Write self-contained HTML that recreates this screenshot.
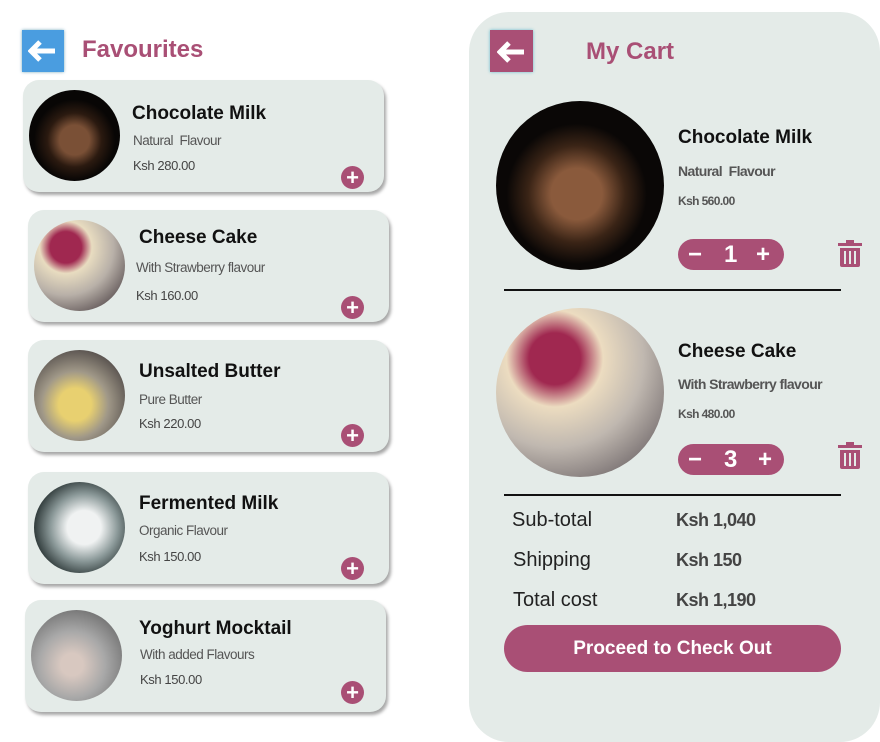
<!DOCTYPE html>
<html><head><style>
*{margin:0;padding:0;box-sizing:border-box}
body{width:880px;height:742px;background:#fff;position:relative;font-family:"Liberation Sans",sans-serif;overflow:hidden}
.a{position:absolute}
.n{letter-spacing:-0.6px}
.card{position:absolute;width:361px;height:112px;background:#e4ebe8;border-radius:16px;box-shadow:2px 3px 3px rgba(0,0,0,.35)}
.card .img{position:absolute;left:6px;top:10px;width:91px;height:91px;border-radius:50%}
.card .t{position:absolute;font-size:19px;font-weight:bold;color:#111}
.card .s{position:absolute;font-size:13.5px;color:#555;letter-spacing:-0.5px}
.card .p{position:absolute;font-size:13px;color:#444;letter-spacing:-0.4px}
.plus{position:absolute;width:23px;height:23px;border-radius:50%;background:#a94f75;color:#fff;font-weight:bold;font-size:22px;line-height:23px;text-align:center}
.pink{color:#a94f75}
.pill{position:absolute;width:106px;height:31px;border-radius:16px;background:#a94f75;color:#fff;font-weight:bold;font-size:24px;line-height:31px}
.line{position:absolute;left:504px;width:337px;height:2px;background:#111}
.row{position:absolute;font-size:20px;color:#222}
.rv{position:absolute;font-size:18px;font-weight:bold;color:#444;letter-spacing:-0.5px}
</style></head><body>
<div class="a" style="left:22px;top:30px;width:42px;height:42px;background:#4a9de0;box-shadow:0 0 3px #7ab"></div>
<svg class="a" style="left:28px;top:40px" width="30" height="22" viewBox="0 0 30 22"><path d="M12 2 L3 11 L12 20 M3 11 H27" stroke="#fff" stroke-width="5" fill="none"/></svg>
<div class="a pink" style="left:82px;top:36px;font-size:24px;font-weight:bold">Favourites</div>

<div class="card" style="left:23px;top:80px"><div class="img" style="background:radial-gradient(circle at 50% 55%,#7a5036 0 22%,#2b1a10 40%,#080605 60%)"></div><div class="t" style="left:109px;top:23px">Chocolate Milk</div><div class="s" style="left:110px;top:53px">Natural &nbsp;Flavour</div><div class="p" style="left:110px;top:78px">Ksh 280.00</div><div class="plus" style="left:318px;top:86px">+</div></div>
<div class="card" style="left:28px;top:210px"><div class="img" style="background:radial-gradient(circle at 35% 30%,#a02850 0 18%,#e8dcc0 30%,#b8b0a8 55%,#6a6060 80%)"></div><div class="t" style="left:111px;top:17px">Cheese Cake</div><div class="s" style="left:108px;top:50px">With Strawberry flavour</div><div class="p" style="left:108px;top:78px">Ksh 160.00</div><div class="plus" style="left:313px;top:86px">+</div></div>
<div class="card" style="left:28px;top:340px"><div class="img" style="background:radial-gradient(circle at 45% 60%,#e8d070 0 22%,#a09888 45%,#504a48 80%)"></div><div class="t" style="left:111px;top:21px">Unsalted Butter</div><div class="s" style="left:111px;top:52px">Pure Butter</div><div class="p" style="left:111px;top:76px">Ksh 220.00</div><div class="plus" style="left:313px;top:84px">+</div></div>
<div class="card" style="left:28px;top:472px"><div class="img" style="background:radial-gradient(circle at 55% 50%,#f0f2f2 0 25%,#8a9898 50%,#1a2424 80%)"></div><div class="t" style="left:111px;top:21px">Fermented Milk</div><div class="s" style="left:111px;top:51px">Organic Flavour</div><div class="p" style="left:111px;top:77px">Ksh 150.00</div><div class="plus" style="left:313px;top:85px">+</div></div>
<div class="card" style="left:25px;top:600px"><div class="img" style="background:radial-gradient(circle at 45% 60%,#d8c8c0 0 15%,#a8a8a8 45%,#707070 80%)"></div><div class="t" style="left:114px;top:18px">Yoghurt Mocktail</div><div class="s" style="left:115px;top:47px">With added Flavours</div><div class="p" style="left:115px;top:72px">Ksh 150.00</div><div class="plus" style="left:316px;top:81px">+</div></div>

<div class="a" style="left:469px;top:12px;width:411px;height:730px;background:#e4ebe8;border-radius:40px"></div>
<div class="a" style="left:490px;top:30px;width:43px;height:42px;background:#a94f75;box-shadow:0 0 3px #6bc"></div>
<svg class="a" style="left:497px;top:41px" width="30" height="22" viewBox="0 0 30 22"><path d="M12 2 L3 11 L12 20 M3 11 H27" stroke="#fff" stroke-width="5" fill="none"/></svg>
<div class="a pink" style="left:586px;top:38px;font-size:24px;font-weight:bold">My Cart</div>

<div class="a" style="left:496px;top:101px;width:168px;height:169px;border-radius:50%;background:radial-gradient(circle at 48% 55%,#8a5a3c 0 20%,#3a2416 38%,#0a0706 55%)"></div>
<div class="a" style="left:678px;top:127px;font-size:19px;font-weight:bold;color:#111">Chocolate Milk</div>
<div class="a n" style="left:678px;top:163px;font-size:14px;font-weight:bold;color:#555">Natural &nbsp;Flavour</div>
<div class="a n" style="left:678px;top:194px;font-size:12px;font-weight:bold;color:#555">Ksh 560.00</div>
<div class="pill" style="left:678px;top:239px"><span class="a" style="left:10px">−</span><span class="a" style="left:46px">1</span><span class="a" style="left:78px">+</span></div>
<svg class="a" style="left:838px;top:240px" width="24" height="27" viewBox="0 0 24 27"><rect x="0" y="3" width="24" height="3" fill="#a94f75"/><rect x="8" y="0" width="8" height="4" fill="#a94f75"/><path d="M2 8 H22 V25 Q22 27 20 27 H4 Q2 27 2 25Z" fill="#a94f75"/><path d="M7 11V24M12 11V24M17 11V24" stroke="#e4ebe8" stroke-width="2"/></svg>
<div class="line" style="top:289px"></div>

<div class="a" style="left:496px;top:308px;width:168px;height:169px;border-radius:50%;background:radial-gradient(circle at 35% 30%,#a02850 0 16%,#ecdcc0 30%,#c0b8b0 55%,#807878 80%)"></div>
<div class="a" style="left:678px;top:341px;font-size:19px;font-weight:bold;color:#111">Cheese Cake</div>
<div class="a n" style="left:678px;top:376px;font-size:14px;font-weight:bold;color:#555">With Strawberry flavour</div>
<div class="a n" style="left:678px;top:407px;font-size:12px;font-weight:bold;color:#555">Ksh 480.00</div>
<div class="pill" style="left:678px;top:444px"><span class="a" style="left:10px">−</span><span class="a" style="left:46px">3</span><span class="a" style="left:80px">+</span></div>
<svg class="a" style="left:838px;top:442px" width="24" height="27" viewBox="0 0 24 27"><rect x="0" y="3" width="24" height="3" fill="#a94f75"/><rect x="8" y="0" width="8" height="4" fill="#a94f75"/><path d="M2 8 H22 V25 Q22 27 20 27 H4 Q2 27 2 25Z" fill="#a94f75"/><path d="M7 11V24M12 11V24M17 11V24" stroke="#e4ebe8" stroke-width="2"/></svg>
<div class="line" style="top:494px"></div>

<div class="row" style="left:512px;top:509px">Sub-total</div><div class="rv" style="left:676px;top:510px">Ksh 1,040</div>
<div class="row" style="left:513px;top:549px">Shipping</div><div class="rv" style="left:676px;top:550px">Ksh 150</div>
<div class="row" style="left:513px;top:589px">Total cost</div><div class="rv" style="left:676px;top:590px">Ksh 1,190</div>
<div class="a" style="left:504px;top:625px;width:337px;height:47px;border-radius:24px;background:#a94f75;color:#fff;font-size:19px;font-weight:bold;text-align:center;line-height:47px">Proceed to Check Out</div>
</body></html>
